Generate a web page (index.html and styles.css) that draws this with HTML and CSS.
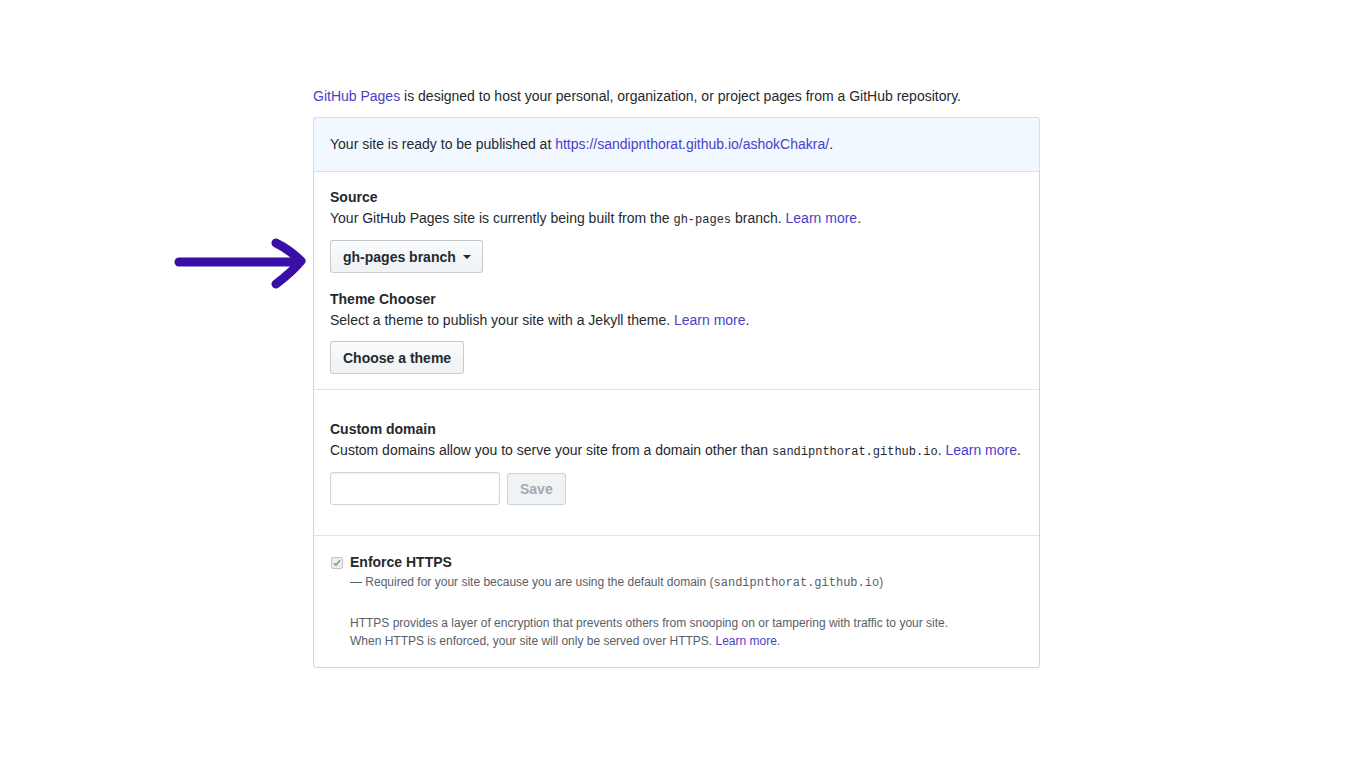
FILE: index.html
```html
<!DOCTYPE html>
<html lang="en">
<head>
<meta charset="utf-8">
<title>GitHub Pages</title>
<link rel="stylesheet" href="styles.css">
</head>
<body>
<div class="page">
  <svg class="annot-arrow" width="140" height="60" viewBox="0 0 140 60" aria-hidden="true">
    <path d="M5 27 L124 27" stroke="#3a0fa8" stroke-width="9" stroke-linecap="round" fill="none"/>
    <path d="M102 8 Q116 15 127 26 Q118 37 102 49" stroke="#3a0fa8" stroke-width="9" stroke-linecap="round" stroke-linejoin="round" fill="none"/>
  </svg>
  <div class="pages">
    <p class="intro"><a href="#">GitHub Pages</a> is designed to host your personal, organization, or project pages from a GitHub repository.</p>
    <div class="box">
      <div class="banner">Your site is ready to be published at <a href="#">https://sandipnthorat.github.io/ashokChakra/</a>.</div>
      <div class="section">
        <h3 class="title">Source</h3>
        <p class="desc">Your GitHub Pages site is currently being built from the <code>gh-pages</code> branch. <a href="#">Learn more</a>.</p>
        <button class="btn btn-select">gh-pages branch <span class="caret"></span></button>
        <h3 class="title title-gap">Theme Chooser</h3>
        <p class="desc">Select a theme to publish your site with a Jekyll theme. <a href="#">Learn more</a>.</p>
        <button class="btn btn-theme">Choose a theme</button>
      </div>
      <div class="section section-domain">
        <h3 class="title">Custom domain</h3>
        <p class="desc">Custom domains allow you to serve your site from a domain other than <code>sandipnthorat.github.io</code>. <a href="#">Learn more</a>.</p>
        <div class="domain-row">
          <input class="input" type="text" aria-label="Custom domain">
          <button class="btn btn-disabled" disabled>Save</button>
        </div>
      </div>
      <div class="section section-https">
        <div class="check-row">
          <span class="checkbox"><svg width="8" height="8" viewBox="0 0 8 8"><path d="M1 4.3 L3 6.3 L7 1.2" stroke="#8a8a8a" stroke-width="1.4" fill="none"/></svg></span>
          <span class="check-label">Enforce HTTPS</span>
        </div>
        <p class="note">— Required for your site because you are using the default domain (<code>sandipnthorat.github.io</code>)</p>
        <p class="help">HTTPS provides a layer of encryption that prevents others from snooping on or tampering with traffic to your site.<br>When HTTPS is enforced, your site will only be served over HTTPS. <a href="#">Learn more</a>.</p>
      </div>
    </div>
  </div>
</div>
</body>
</html>
```

FILE: styles.css
```css
* { box-sizing: border-box; }
html, body { margin: 0; padding: 0; background: #fff; }
body {
  font-family: "Liberation Sans", Arial, sans-serif;
  font-size: 14px;
  line-height: 21px;
  color: #24292e;
}
a { color: #4b3fc8; text-decoration: none; }
code { font-family: "Liberation Mono", monospace; font-size: 12px; line-height: 1; }
.page { position: relative; padding: 86px 0 100px 313px; }
.annot-arrow { position: absolute; left: 174px; top: 235px; }
.pages { width: 727px; }
.intro { margin: 0 0 10px; }
.box { border: 1px solid #d1d5da; border-radius: 3px; }
.banner {
  background: #f1f8ff;
  margin: -1px -1px 0;
  border: 1px solid #c8e1ff;
  border-radius: 3px 3px 0 0;
  padding: 16px 16px;
}
.section { padding: 15px 16px 15px; border-top: 1px solid #e1e4e8; }
.banner + .section { border-top: 0; }
.title { margin: 0; font-size: 14px; font-weight: bold; line-height: 21px; }
.title-gap { margin-top: 16px; }
.desc { margin: 0; }
.btn {
  display: flex; align-items: center; gap: 7px;
  width: fit-content;
  margin: 11px 0 0;
  height: 32px;
  padding: 0 12px;
  font-family: inherit; font-size: 14px; font-weight: bold; color: #24292e;
  background: linear-gradient(#fafbfc, #eff3f6 90%);
  border: 1px solid rgba(27,31,35,.2);
  border-radius: 3px;
}
.btn-select { height: 33px; padding-right: 11px; }
.btn-theme { margin-top: 10px; height: 33px; }
.caret {
  width: 0; height: 0;
  border-left: 4px solid transparent; border-right: 4px solid transparent;
  border-top: 4px solid #24292e;
}
.section-domain { padding-top: 29px; padding-bottom: 30px; }
.domain-row { display: flex; gap: 7px; margin-top: 11px; align-items: flex-start; }
.input {
  width: 170px; height: 33px;
  border: 1px solid #d1d5da; border-radius: 3px;
  box-shadow: inset 0 1px 2px rgba(27,31,35,.075);
  margin: 0;
}
.btn-disabled {
  margin-top: 1px; height: 32px; padding: 0 12px;
  color: #a3aab1;
  background: #eff3f6;
  border-color: rgba(27,31,35,.15);
}
.section-https { padding-top: 16px; padding-bottom: 17px; }
.check-row { display: flex; align-items: center; gap: 7px; height: 21px; }
.checkbox {
  width: 12px; height: 12px; margin-left: 1px;
  border: 1px solid #c4c4c4; border-radius: 2px; background: #ededed;
  display: flex; align-items: center; justify-content: center;
}
.check-label { font-weight: bold; font-size: 14px; }
.note { margin: 1px 0 0 20px; font-size: 12px; line-height: 16px; color: #586069; }
.help { margin: 24px 0 0 20px; font-size: 12px; line-height: 18px; color: #586069; }
```
